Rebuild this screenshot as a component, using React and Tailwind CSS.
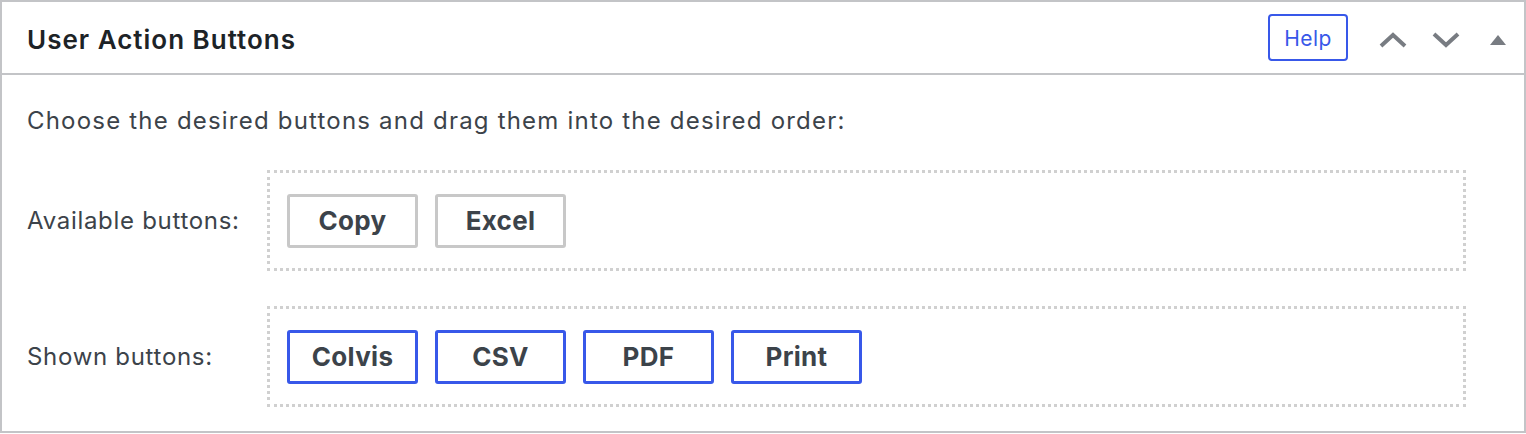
import React from 'react'

const available = ['Copy', 'Excel']
const shown = ['Colvis', 'CSV', 'PDF', 'Print']

function ChevronUp() {
  return (
    <svg width="28" height="16" viewBox="0 0 28 16" fill="none">
      <polyline points="2,14 14,3 26,14" stroke="#787c82" strokeWidth="4" />
    </svg>
  )
}

function ChevronDown() {
  return (
    <svg width="28" height="16" viewBox="0 0 28 16" fill="none">
      <polyline points="2,2 14,13 26,2" stroke="#787c82" strokeWidth="4" />
    </svg>
  )
}

function Triangle() {
  return (
    <svg width="16" height="10" viewBox="0 0 16 10">
      <polygon points="0,10 8,0 16,10" fill="#787c82" />
    </svg>
  )
}

function ActionButton({ label, active }) {
  return (
    <div
      className={
        active
          ? 'w-[131px] h-[54px] flex items-center justify-center border-[3px] border-[#3858e9] rounded-[3px] text-[26px] font-bold tracking-[0.3px] text-[#3c434a]'
          : 'w-[131px] h-[54px] flex items-center justify-center border-[3px] border-[#c8c8c8] rounded-[3px] text-[26px] font-bold tracking-[0.3px] text-[#3c434a]'
      }
    >
      {label}
    </div>
  )
}

export default function App() {
  return (
    <div className="w-[1526px] h-[434px] bg-white font-['Inter','Liberation_Sans',sans-serif]">
      <div className="h-[433px] border-2 border-[#c3c4c7] bg-white flex flex-col">
        {/* header */}
        <div className="h-[73px] border-b-2 border-[#c3c4c7] flex items-center pl-[25px] pt-[4px]">
          <h2 className="flex-1 text-[26px] font-semibold text-[#1d2327] tracking-[1px]">User Action Buttons</h2>
          <button className="w-[80px] h-[47px] border-2 border-[#3858e9] rounded-[4px] text-[21px] tracking-[0.4px] text-[#3858e9] mr-[19px] -mt-[4px] pt-[3px]">
            Help
          </button>
          <div className="w-[52px] flex justify-center"><ChevronUp /></div>
          <div className="w-[53px] flex justify-center"><ChevronDown /></div>
          <div className="w-[52px] flex justify-center"><Triangle /></div>
        </div>

        {/* body */}
        <div className="flex-1 pl-[25px] pt-[31px] text-[#3c434a]">
          <p className="text-[24px] leading-[30px] tracking-[1.2px]">Choose the desired buttons and drag them into the desired order:</p>
          <div className="grid grid-cols-[240px_1199px] items-center mt-[34px]">
            <span className="text-[24px] tracking-[0.7px]">Available buttons:</span>
            <div className="h-[101px] border-[3px] border-dotted border-[#d0d0d0] flex items-center gap-[17px] pl-[17px]">
              {available.map(b => <ActionButton key={b} label={b} />)}
            </div>
          </div>
          <div className="grid grid-cols-[240px_1199px] items-center mt-[35px]">
            <span className="text-[24px] tracking-[0.7px]">Shown buttons:</span>
            <div className="h-[101px] border-[3px] border-dotted border-[#d0d0d0] flex items-center gap-[17px] pl-[17px]">
              {shown.map(b => <ActionButton key={b} label={b} active />)}
            </div>
          </div>
        </div>
      </div>
    </div>
  )
}
